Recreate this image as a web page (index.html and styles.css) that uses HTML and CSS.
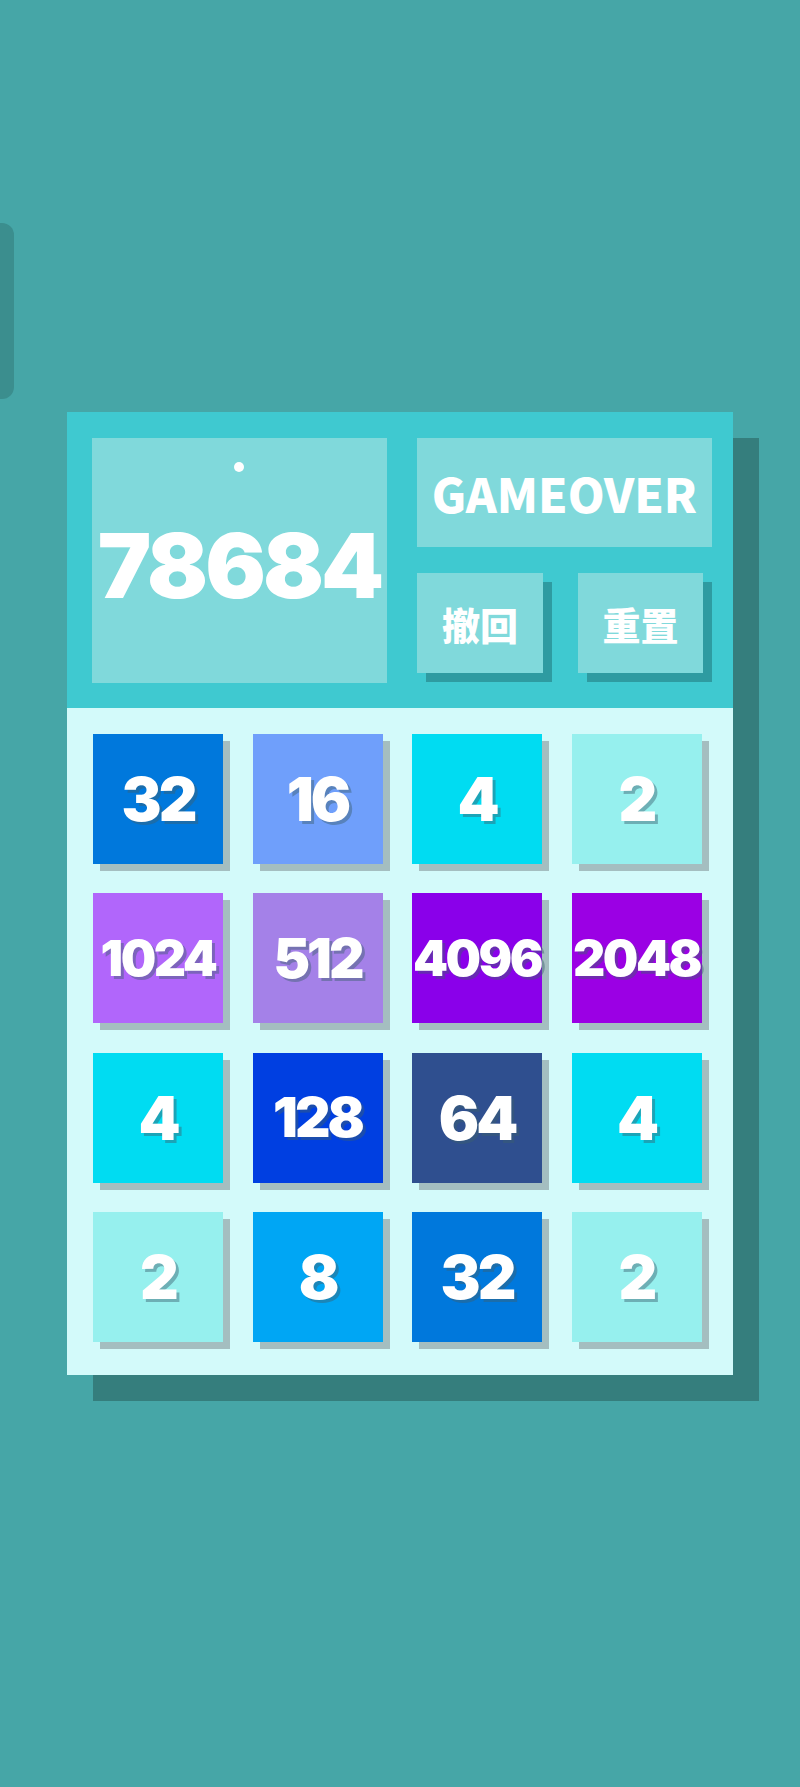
FILE: index.html
```html
<!DOCTYPE html>
<html lang="zh">
<head>
<meta charset="utf-8">
<title>2048</title>
<link rel="stylesheet" href="styles.css">
</head>
<body>
<div class="side-tab"></div>
<main class="page">
  <section class="panel">
    <header class="header">
      <div class="score-box">
        <span class="dot"></span>
        <span class="score">78684</span>
      </div>
      <div class="controls">
        <div class="status">GAMEOVER</div>
        <div class="buttons">
          <button class="btn">撤回</button>
          <button class="btn btn-reset">重置</button>
        </div>
      </div>
    </header>
    <div class="board">
      <div class="tile t32">32</div>
      <div class="tile t16">16</div>
      <div class="tile t4">4</div>
      <div class="tile t2">2</div>
      <div class="tile t1024 d4">1024</div>
      <div class="tile t512 d3">512</div>
      <div class="tile t4096 d4">4096</div>
      <div class="tile t2048 d4">2048</div>
      <div class="tile t4">4</div>
      <div class="tile t128 d3">128</div>
      <div class="tile t64">64</div>
      <div class="tile t4">4</div>
      <div class="tile t2">2</div>
      <div class="tile t8">8</div>
      <div class="tile t32">32</div>
      <div class="tile t2">2</div>
    </div>
  </section>
</main>
</body>
</html>
```
FILE: styles.css
```css
html, body {
  margin: 0;
  padding: 0;
}
body {
  background: #46a6a7;
  min-height: 1787px;
  font-family: "Inter", "Noto Sans CJK SC", sans-serif;
  position: relative;
}
.side-tab {
  position: absolute;
  left: 0;
  top: 223px;
  width: 14px;
  height: 176px;
  background: #3b8e8e;
  border-radius: 0 12px 12px 0;
}
.page {
  padding: 412px 0 0 67px;
}
.panel {
  width: 666px;
  box-shadow: 26px 26px 0 #357e7d;
}
.header {
  background: #3fc9d0;
  display: flex;
  gap: 30px;
  padding: 26px 21px 25px 25px;
}
.score-box {
  width: 295px;
  height: 245px;
  background: #80d9db;
  position: relative;
  display: flex;
  align-items: center;
  justify-content: center;
}
.dot {
  position: absolute;
  top: 24px;
  left: 142px;
  width: 10px;
  height: 10px;
  border-radius: 50%;
  background: #ffffff;
}
.score {
  color: #ffffff;
  font-weight: 900;
  font-size: 90px;
  letter-spacing: -3px;
  margin-top: 10px;
  line-height: 1;
}
.controls {
  width: 295px;
  display: flex;
  flex-direction: column;
  gap: 26px;
}
.status {
  height: 109px;
  background: #80d9db;
  color: #ffffff;
  font-family: "Noto Sans CJK SC", sans-serif;
  font-weight: 900;
  font-size: 47px;
  display: flex;
  align-items: center;
  justify-content: center;
}
.buttons {
  display: flex;
  gap: 35px;
}
.btn {
  width: 126px;
  height: 100px;
  border: 0;
  padding: 0;
  background: #80d9db;
  color: #ffffff;
  font-family: "Noto Sans CJK SC", sans-serif;
  font-weight: 900;
  font-size: 38px;
  box-shadow: 9px 9px 0 #2e9ba1;
}
.btn-reset {
  width: 125px;
}
.board {
  background: #d3fafa;
  padding: 26px 33px 33px 26px;
  display: grid;
  grid-template-columns: repeat(4, 130px);
  grid-auto-rows: 130px;
  column-gap: 29.5px;
  row-gap: 29.3px;
}
.tile {
  display: flex;
  align-items: center;
  justify-content: center;
  color: #ffffff;
  font-weight: 900;
  font-size: 60px;
  letter-spacing: -3px;
  line-height: 1;
  box-shadow: 7px 7px 0 #a4bec0;
  text-shadow: 3px 3px 0 rgba(60, 95, 110, 0.45);
}
.tile.d3 { font-size: 55px; }
.tile.d4 { font-size: 50px; letter-spacing: -2.5px; }
.t2 { background: #96f0ee; }
.t4 { background: #00dcf2; }
.t8 { background: #00a6f4; }
.t16 { background: #6f9ffb; }
.t32 { background: #0078dc; }
.t64 { background: #2f4f8f; }
.t128 { background: #003fe1; }
.t512 { background: #a481e8; }
.t1024 { background: #b166fb; }
.t2048 { background: #9b00e4; }
.t4096 { background: #8a00ea; }
```
